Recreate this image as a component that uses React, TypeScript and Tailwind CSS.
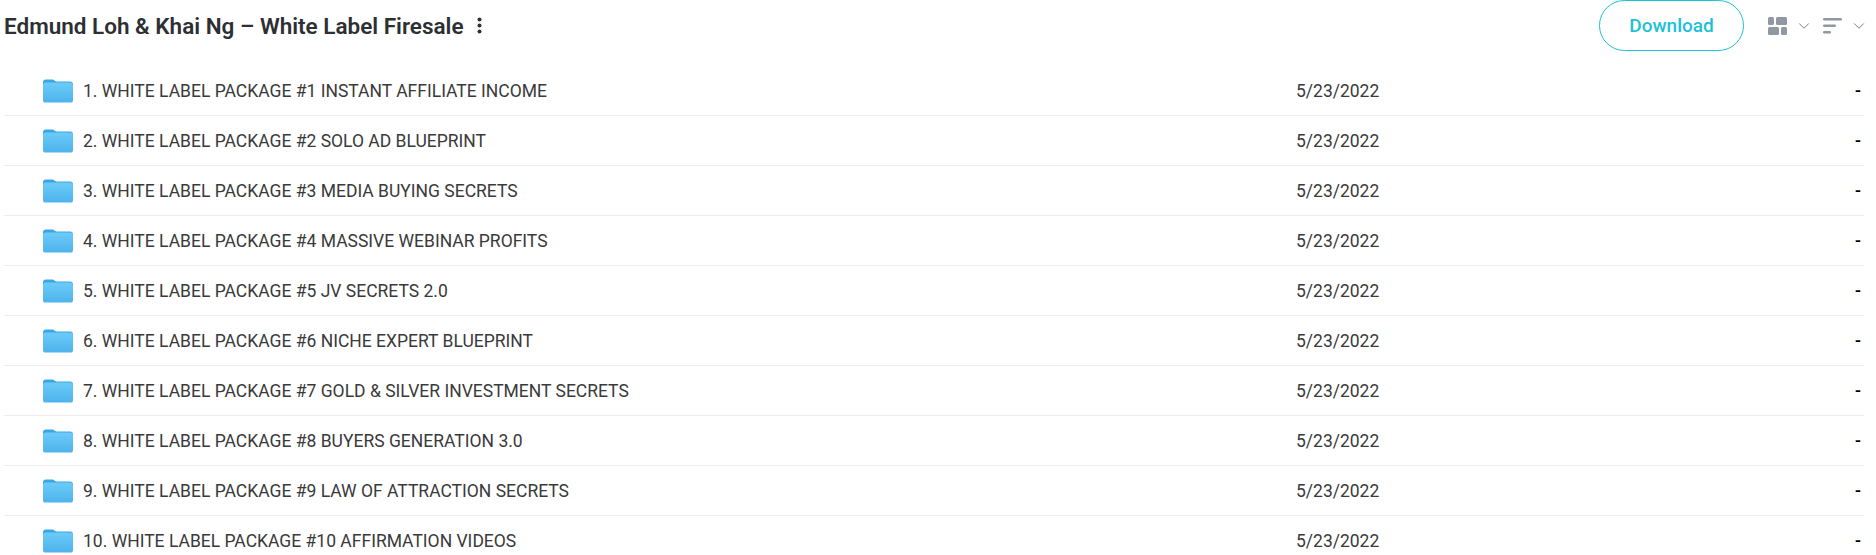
import { ChevronDown } from "lucide-react";

const folders = [
  "1. WHITE LABEL PACKAGE #1 INSTANT AFFILIATE INCOME",
  "2. WHITE LABEL PACKAGE #2 SOLO AD BLUEPRINT",
  "3. WHITE LABEL PACKAGE #3 MEDIA BUYING SECRETS",
  "4. WHITE LABEL PACKAGE #4 MASSIVE WEBINAR PROFITS",
  "5. WHITE LABEL PACKAGE #5 JV SECRETS 2.0",
  "6. WHITE LABEL PACKAGE #6 NICHE EXPERT BLUEPRINT",
  "7. WHITE LABEL PACKAGE #7 GOLD & SILVER INVESTMENT SECRETS",
  "8. WHITE LABEL PACKAGE #8 BUYERS GENERATION 3.0",
  "9. WHITE LABEL PACKAGE #9 LAW OF ATTRACTION SECRETS",
  "10. WHITE LABEL PACKAGE #10 AFFIRMATION VIDEOS",
];

function FolderIcon() {
  return (
    <svg width="30" height="24" viewBox="0 0 30 24" className="shrink-0">
      <defs>
        <linearGradient id="folderFill" x1="0" y1="0" x2="0" y2="1">
          <stop offset="0" stopColor="#6ccbf8" />
          <stop offset="1" stopColor="#4db3ec" />
        </linearGradient>
      </defs>
      <path
        d="M0 3.5C0 1.5 1 .5 3 .5h6.5c1.6 0 2.2 1.9 4 1.9H27c2 0 3 1 3 3V8H0z"
        fill="#3ba6e6"
      />
      <rect x="0" y="3.6" width="30" height="20" rx="2.6" fill="url(#folderFill)" />
    </svg>
  );
}

function LayoutIcon() {
  return (
    <svg width="19" height="18" viewBox="0 0 19 18" fill="#8f98a3">
      <rect x="0" y="0" width="6" height="8" rx="1.5" />
      <rect x="8" y="0" width="11" height="8" rx="1.5" />
      <rect x="0" y="10" width="11" height="8" rx="1.5" />
      <rect x="13" y="10" width="6" height="8" rx="1.5" />
    </svg>
  );
}

function SortIcon() {
  return (
    <svg width="19" height="16" viewBox="0 0 19 16" fill="#8f98a3">
      <rect x="0" y="0" width="19" height="2.4" rx="1.2" />
      <rect x="0" y="6.5" width="13" height="2.4" rx="1.2" />
      <rect x="0" y="13" width="8" height="2.4" rx="1.2" />
    </svg>
  );
}

export default function App() {
  return (
    <div className="w-[1876px] h-[555px] overflow-hidden bg-white pl-1 pr-[12px] font-['Roboto',sans-serif] text-[#3a3a3a]">
      <div className="flex items-center justify-between h-[51px]">
        <div className="flex items-center gap-[13px]">
          <h1 className="text-[22.5px] leading-7 font-semibold text-[#2c2f33]">
            Edmund Loh &amp; Khai Ng – White Label Firesale
          </h1>
          <svg width="5" height="17" viewBox="0 0 5 17" fill="#2c2f33">
            <circle cx="2.5" cy="2.5" r="2" />
            <circle cx="2.5" cy="8.5" r="2" />
            <circle cx="2.5" cy="14.5" r="2" />
          </svg>
        </div>
        <div className="flex items-center">
          <button className="w-[145px] h-[51px] pt-px rounded-full border border-[#1cc1d6] text-[#1cc1d6] text-[19px] font-medium mr-[24px]">
            Download
          </button>
          <LayoutIcon />
          <ChevronDown size={18} strokeWidth={1.25} color="#6f757d" className="ml-[8px] mr-[10px]" />
          <SortIcon />
          <ChevronDown size={18} strokeWidth={1.25} color="#6f757d" className="ml-[8px] -mr-1" />
        </div>
      </div>

      <div className="pt-[15px]">
        {folders.map((name) => (
          <div
            key={name}
            className="flex items-center h-[50px] border-b border-[#eeeeee] last:border-b-0 text-[17.5px]"
          >
            <div className="w-[79px] pl-[39px] shrink-0">
              <FolderIcon />
            </div>
            <div className="w-[1213px] shrink-0 pt-px">{name}</div>
            <div className="flex-1 pt-px">5/23/2022</div>
            <div className="pr-[3px] pt-px font-medium text-black">-</div>
          </div>
        ))}
      </div>
    </div>
  );
}
